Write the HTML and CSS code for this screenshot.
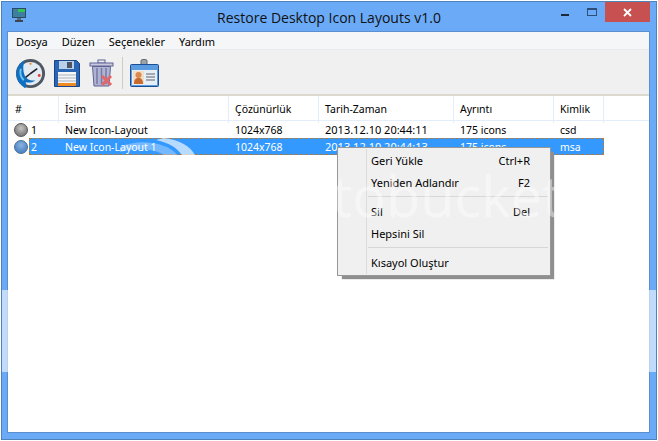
FILE: index.html
```html
<!DOCTYPE html>
<html lang="tr">
<head>
<meta charset="utf-8">
<title>Restore Desktop Icon Layouts v1.0</title>
<link rel="stylesheet" href="styles.css">
</head>
<body>
<div class="window">
  <header class="titlebar">
    <svg class="app-icon" width="16" height="16" viewBox="0 0 16 16"><rect x="1" y="1" width="14" height="10" fill="#2b4a66"/><rect x="2" y="2" width="12" height="8" fill="#3d7f9e"/><rect x="7" y="2" width="7" height="3" fill="#35c25a"/><rect x="6" y="11" width="4" height="2" fill="#5d6b78"/><rect x="4" y="13" width="8" height="2" fill="#3c4650"/></svg>
    <div class="title">Restore Desktop Icon Layouts v1.0</div>
    <div class="controls">
      <span class="ctl-min"></span>
      <span class="ctl-max"></span>
      <span class="ctl-close"><svg width="9" height="9" viewBox="0 0 9 9"><path d="M1 1L8 8M8 1L1 8" stroke="#fff" stroke-width="1.8"/></svg></span>
    </div>
  </header>
  <div class="client">
    <nav class="menubar"><span>Dosya</span><span>Düzen</span><span>Seçenekler</span><span>Yardım</span></nav>
    <div class="toolbar">
      <svg class="tb-clock" width="31" height="31" viewBox="0 0 32 32">
        <circle cx="16" cy="16" r="15" fill="#4f5862"/>
        <circle cx="16" cy="16" r="12" fill="#e4eaf1"/>
        <path d="M10 2C3 6 0 14 2 21c1 4 4 7 8 10l2-1-1-5c4 1 8 0 10-2-5 1-9-1-11-5C8 13 8 7 10 2z" fill="#0f6fc0"/>
        <path d="M6 11c-1 4 0 9 3 12" stroke="#6cc4f3" stroke-width="2" fill="none"/>
        <path d="M16 16L23 11M16 16L11 20" stroke="#1f2228" stroke-width="1.6"/>
        <circle cx="25" cy="18" r="1.5" fill="#e2402c"/><circle cx="16" cy="6" r="1.2" fill="#ec8b3a"/>
      </svg>
      <svg class="tb-save" width="26" height="27" viewBox="0 0 26 27">
        <path d="M.5.5h22l3 3v23H.5z" fill="#2a66b4" stroke="#1a4488"/>
        <rect x="5" y="1" width="15" height="8" fill="#b9d0ea"/><rect x="13" y="2" width="5" height="6" fill="#4b5563"/>
        <rect x="4" y="12" width="18" height="14" fill="#f6f6f6"/>
        <path d="M4 15h18M4 18h18M4 21h18" stroke="#a9b3bf"/>
        <rect x="4" y="23" width="18" height="3" fill="#ef8a24"/>
      </svg>
      <svg class="tb-trash" width="25" height="28" viewBox="0 0 25 28">
        <rect x="9" y="1" width="7" height="3" fill="none" stroke="#5f6396"/>
        <rect x="1" y="4" width="23" height="3" fill="#c9cbdc" stroke="#5f6396"/>
        <path d="M3.500 7.500h18L20 27H5z" fill="#b0b4d2" stroke="#5f6396"/>
        <path d="M8 9v16M12.500 9v16M17 9v16" stroke="#7579a6" stroke-width="1.500"/>
        <path d="M13 17L22 26M22 17L13 26" stroke="#e0686a" stroke-width="3"/>
      </svg>
      <span class="tb-sep"></span>
      <svg class="tb-card" width="29" height="28" viewBox="0 0 29 28">
        <rect x="11" y="0.500" width="6" height="7" rx="1.500" fill="#9aa3a8" stroke="#5e676c"/>
        <rect x="0.500" y="5.500" width="28" height="22" rx="1" fill="#5b9ce0" stroke="#1c4e96"/>
        <rect x="2" y="11" width="25" height="15" fill="#e6eef6"/>
        <rect x="3" y="12" width="11" height="13" fill="#f1ddc8"/>
        <circle cx="8.500" cy="16" r="3" fill="#d98a4e"/><path d="M4 25c0-5 2-6 4.500-6s4.500 1 4.500 6z" fill="#c76a2c"/>
        <path d="M16 15h9M16 18h9M16 21h9" stroke="#8d9398" stroke-width="1.500"/>
      </svg>
    </div>
    <div class="list-header">
      <div class="hc hc-first">#</div>
      <div class="hc">İsim</div>
      <div class="hc">Çözünürlük</div>
      <div class="hc">Tarih-Zaman</div>
      <div class="hc">Ayrıntı</div>
      <div class="hc">Kimlik</div>
    </div>
    <div class="row">
      <span class="bullet bullet-gray"></span>
      <div class="cells"><span class="c-num">1</span><span>New Icon-Layout</span><span>1024x768</span><span class="c-date">2013.12.10 20:44:11</span><span>175 icons</span><span>csd</span></div>
    </div>
    <div class="row">
      <span class="bullet bullet-blue"></span>
      <div class="cells selected"><span class="c-num">2</span><span>New Icon-Layout 1</span><span>1024x768</span><span class="c-date">2013.12.10 20:44:13</span><span>175 icons</span><span>msa</span>
        <svg class="swirl" width="80" height="17" viewBox="0 0 80 17"><path d="M44 0C60 2 70 8 75 17H62C57 10 50 5 36 2z" fill="#fff" fill-opacity=".65"/><path d="M0 9C14 3 30 3 44 8 50 10 55 14 57 17H44C36 11 18 9 0 14z" fill="#fff" fill-opacity=".32"/></svg>
      </div>
    </div>
  </div>
  <div class="context-menu">
    <div class="mi"><span>Geri Yükle</span><span>Ctrl+R</span></div>
    <div class="mi"><span>Yeniden Adlandır</span><span>F2</span></div>
    <div class="msep"></div>
    <div class="mi"><span>Sil</span><span>Del</span></div>
    <div class="mi"><span>Hepsini Sil</span></div>
    <div class="msep"></div>
    <div class="mi"><span>Kısayol Oluştur</span></div>
  </div>
  <div class="wm-band"></div>
  <div class="wm-text">photobucket</div>
</div>
</body>
</html>
```
FILE: styles.css
```css
* { box-sizing: border-box; }
html, body { margin: 0; padding: 0; background: #fff; overflow: hidden; }
body { width: 658px; height: 441px; padding: 1px; font-family: "Noto Sans", "Liberation Sans", sans-serif; font-size: 10.5px; color: #000; }
.window { position: relative; width: 656px; height: 439px; border: 1px solid #4f82ba; background: #6aaaf7; display: flex; flex-direction: column; overflow: hidden; }
.titlebar { height: 29px; flex: none; display: grid; grid-template-columns: 1fr auto 1fr; align-items: start; }
.app-icon { margin: 5px 0 0 9px; }
.title { font-family: "Open Sans", sans-serif; font-size: 14px; line-height: 19px; margin-top: 6px; color: #111; }
.controls { justify-self: end; display: flex; padding-right: 6px; }
.ctl-min { width: 8px; height: 2px; background: #1c2a3a; margin: 12px 18px 0 0; }
.ctl-max { width: 10px; height: 8px; border: 1px solid #2e4f78; border-top-width: 2px; margin: 6px 8px 0 0; }
.ctl-close { width: 45px; height: 20px; background: #c75050; display: flex; align-items: center; justify-content: center; }
.client { flex: 1; margin: 0 6px 6px 5px; border: 1px solid #5b8fd0; background: #fff; display: flex; flex-direction: column; }
.menubar { height: 18px; flex: none; background: #f5f6f7; border-bottom: 1px solid #e9ecee; display: flex; gap: 14px; padding-left: 8px; font-size: 11px; line-height: 19px; }
.toolbar { height: 46px; flex: none; background: #f0f0f0; border-bottom: 2px solid #dcd9ce; display: flex; align-items: center; padding: 2px 0 0 7px; }
.tb-clock { margin-right: 8px; }
.tb-save { margin-right: 9px; }
.tb-trash { margin-right: 8px; }
.tb-sep { width: 1px; height: 32px; background: #cfcdc2; margin-right: 7px; }
.list-header { height: 25px; flex: none; display: grid; grid-template-columns: 51px 170px 90px 135px 100px 50px; border-bottom: 1px solid #e3eefa; }
.hc { border-right: 1px solid #e3eefa; padding-left: 6px; line-height: 27px; }
.hc-first { padding-left: 7px; }
.row { height: 17px; flex: none; display: flex; align-items: center; }
.bullet { width: 14px; height: 14px; border-radius: 50%; margin: 0 0 0 6px; flex: none; }
.bullet-gray { background: radial-gradient(circle at 50% 35%, #c4c4c4, #7f7f7f 70%); border: 1px solid #555; }
.bullet-blue { background: radial-gradient(circle at 50% 35%, #8ab4e2, #4f86c4 70%); border: 1px solid #4a6d96; }
.cells { position: relative; margin-left: 1px; height: 17px; width: 575px; display: grid; grid-template-columns: 30px 170px 90px 135px 100px 50px; line-height: 19px; }
.cells span { padding-left: 6px; white-space: nowrap; overflow: hidden; }
.cells .c-num { padding-left: 2px; }
.cells .c-date { font-size: 11px; line-height: 17px; }
.selected { background: #3399ff; color: #fff; outline: 1px dashed #b07a3c; outline-offset: -1px; overflow: hidden; }
.swirl { position: absolute; left: 91px; top: 0; pointer-events: none; }
.context-menu { position: absolute; left: 335px; top: 145px; width: 214px; height: 129px; background: #f0f0f0; border: 1px solid #979797; box-shadow: 4px 4px 1px -1px #8f8f8f; background-image: linear-gradient(#dcdcdc, #dcdcdc); background-size: 1px 125px; background-position: 28px 1px; background-repeat: no-repeat; padding-top: 1px; font-size: 11px; }
.mi { height: 22px; display: flex; justify-content: space-between; align-items: center; padding: 0 20px 0 33px; }
.msep { height: 1px; background: #d7d7d7; margin: 3px 2px 3px 30px; }
.wm-band { position: absolute; left: -1px; right: -1px; top: 288px; height: 82px; background: rgba(255,255,255,.58); pointer-events: none; }
.wm-text { position: absolute; left: 228px; top: 158px; font-family: "Open Sans", sans-serif; font-size: 56px; line-height: 70px; color: rgba(255,255,255,.42); pointer-events: none; white-space: nowrap; }
```
